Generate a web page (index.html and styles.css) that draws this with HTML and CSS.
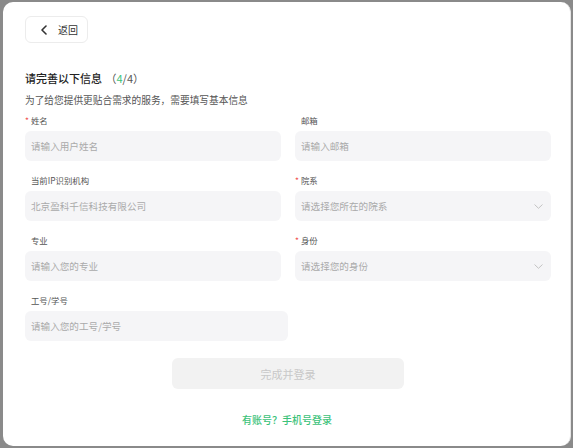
FILE: index.html
```html
<!DOCTYPE html>
<html lang="zh">
<head>
<meta charset="utf-8">
<link rel="stylesheet" href="styles.css">
</head>
<body>
<div class="card">
  <button class="back">
    <svg class="back-icon" width="8" height="10" viewBox="0 0 8 10"><path d="M6 1 L2 5 L6 9" fill="none" stroke="#333" stroke-width="1.6" stroke-linecap="round" stroke-linejoin="round"/></svg>
    <span>返回</span>
  </button>
  <h1 class="title">请完善以下信息 <span class="step">（<span class="cur">4</span>/4）</span></h1>
  <p class="subtitle">为了给您提供更贴合需求的服务，需要填写基本信息</p>
  <div class="grid">
    <div class="field">
      <div class="label"><span class="req">*</span>姓名</div>
      <div class="input">请输入用户姓名</div>
    </div>
    <div class="field">
      <div class="label plain">邮箱</div>
      <div class="input">请输入邮箱</div>
    </div>
    <div class="field">
      <div class="label plain">当前IP识别机构</div>
      <div class="input">北京盈科千信科技有限公司</div>
    </div>
    <div class="field">
      <div class="label"><span class="req">*</span>院系</div>
      <div class="input select">请选择您所在的院系<svg class="arrow" width="9" height="5" viewBox="0 0 9 5"><path d="M0.5 0.5 L4.5 4.3 L8.5 0.5" fill="none" stroke="#c4c4c4" stroke-width="1"/></svg></div>
    </div>
    <div class="field">
      <div class="label plain">专业</div>
      <div class="input">请输入您的专业</div>
    </div>
    <div class="field">
      <div class="label"><span class="req">*</span>身份</div>
      <div class="input select">请选择您的身份<svg class="arrow" width="9" height="5" viewBox="0 0 9 5"><path d="M0.5 0.5 L4.5 4.3 L8.5 0.5" fill="none" stroke="#c4c4c4" stroke-width="1"/></svg></div>
    </div>
    <div class="field wide">
      <div class="label plain">工号/学号</div>
      <div class="input">请输入您的工号/学号</div>
    </div>
  </div>
  <div class="actions">
    <button class="submit">完成并登录</button>
    <a class="link">有账号？手机号登录</a>
  </div>
</div>
</body>
</html>
```
FILE: styles.css
```css
* { box-sizing: border-box; }
html, body {
  margin: 0;
  padding: 0;
  background: #8a8a8a;
  width: 573px;
  height: 448px;
  overflow: hidden;
  font-family: "Noto Sans CJK SC", "Noto Sans", sans-serif;
}
.card {
  margin: 2px 2px 0 3px;
  height: 444px;
  background: #fff;
  border-radius: 10px;
  border-right: 1px solid #e6e6e6;
  padding: 14px 21px 0 22px;
}
.back {
  display: flex;
  align-items: center;
  width: 63px;
  height: 27px;
  padding: 0 0 0 14px;
  background: #fff;
  border: 1px solid #ececec;
  border-radius: 6px;
  font-family: inherit;
  font-size: 10px;
  color: #333;
}
.back-icon { margin-right: 10px; }
.title {
  margin: 27px 0 0;
  font-size: 11px;
  line-height: 17px;
  font-weight: 500;
  color: #222;
}
.step { font-weight: 400; color: #555; margin-left: 1px; }
.cur { color: #3cc27a; }
.subtitle {
  margin: 5px 0 0;
  font-size: 9.7px;
  line-height: 16px;
  color: #555;
}
.grid {
  margin-top: 6px;
  display: grid;
  grid-template-columns: 256px 256px;
  column-gap: 14px;
  row-gap: 13px;
}
.label {
  font-size: 8.4px;
  line-height: 12px;
  color: #555;
  margin-bottom: 5px;
}
.label.plain { padding-left: 6px; }
.req { color: #f0524f; margin-right: 2px; }
.input {
  height: 30px;
  background: #f5f5f7;
  border-radius: 6px;
  display: flex;
  align-items: center;
  justify-content: space-between;
  padding: 0 8px 0 6px;
  font-size: 9.6px;
  color: #aaa;
}
.field.wide .input { width: 263px; }
.arrow { flex: none; }
.actions {
  display: flex;
  flex-direction: column;
  align-items: center;
  margin-top: 17px;
}
.submit {
  width: 232px;
  height: 31px;
  border: none;
  border-radius: 6px;
  background: #f2f2f2;
  color: #c8c8c8;
  font-family: inherit;
  font-size: 11px;
  margin-left: 2px;
}
.link {
  margin-top: 23px;
  font-size: 10px;
  line-height: 16px;
  color: #3cc27a;
  font-weight: 500;
}
```
